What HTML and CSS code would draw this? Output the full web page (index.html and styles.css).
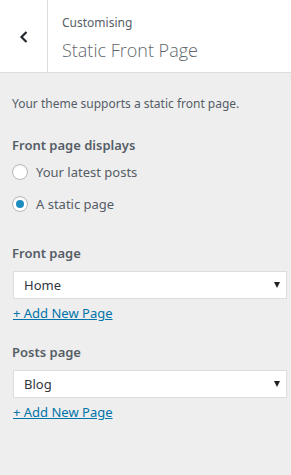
FILE: index.html
```html
<!DOCTYPE html>
<html lang="en">
<head>
	<meta charset="UTF-8">
	<title>Static Front Page</title>
	<link rel="stylesheet" href="styles.css">
</head>
<body>
	<div class="panel">
		<div class="head">
			<div class="back">
				<svg width="10" height="12" viewBox="0 0 10 12"><path d="M7.5 1 L2.5 6 L7.5 11" fill="none" stroke="#23282d" stroke-width="2.2"/></svg>
			</div>
			<div class="title">
				<span class="sub">Customising</span>
				<h3>Static Front Page</h3>
			</div>
		</div>

		<div class="body">
			<p class="desc">Your theme supports a static front page.</p>

			<div class="group">
				<span class="label">Front page displays</span>
				<label class="radio"><span class="dot"></span>Your latest posts</label>
				<label class="radio"><span class="dot on"></span>A static page</label>
			</div>

			<div class="group pick">
				<span class="label">Front page</span>
				<div class="select"><span>Home</span><i class="arr"></i></div>
				<a href="#" class="add">+ Add New Page</a>
			</div>

			<div class="group pick2">
				<span class="label">Posts page</span>
				<div class="select"><span>Blog</span><i class="arr"></i></div>
				<a href="#" class="add">+ Add New Page</a>
			</div>
		</div>
	</div>
</body>
</html>
```

FILE: styles.css
```css
* {
	padding: 0;
	margin: 0;
	box-sizing: border-box;
}
body {
	background: #eee;
	font-family: "Noto Sans", "Open Sans", sans-serif;
	color: #555d66;
	font-size: 13px;
}
.head {
	display: flex;
	height: 73px;
	background: #fff;
	border-bottom: 1px solid #ddd;
}
.back {
	width: 48px;
	border-right: 1px solid #ddd;
	display: flex;
	align-items: center;
	justify-content: center;
	padding-top: 2px;
}
.title {
	padding: 13px 0 0 14px;
}
.sub {
	display: block;
	font-size: 12px;
	line-height: 20px;
}
.title h3 {
	font-family: "Open Sans", "Noto Sans", sans-serif;
	font-size: 18px;
	font-weight: 300;
	line-height: 26px;
	margin-top: 4px;
	color: #5f666d;
}
.body {
	padding: 0 4px 0 12px;
}
.desc {
	margin-top: 21px;
	line-height: 20px;
	font-size: 12px;
}
.group {
	margin-top: 21px;
	line-height: 20px;
}
.label {
	display: block;
	font-size: 13px;
	font-weight: 600;
	line-height: 20px;
	margin-bottom: 8px;
}
.radio {
	display: flex;
	align-items: center;
	height: 18px;
	margin-bottom: 14px;
	font-size: 13px;
}
.dot {
	width: 16px;
	height: 16px;
	border: 1px solid #b4b9be;
	border-radius: 50%;
	background: #fff;
	margin-right: 8px;
	box-shadow: inset 0 1px 2px rgba(0,0,0,0.07);
	display: flex;
	align-items: center;
	justify-content: center;
}
.dot.on:after {
	content: "";
	width: 8px;
	height: 8px;
	border-radius: 50%;
	background: #1e8cbe;
}
.pick {
	margin-top: 30px;
}
.pick2 {
	margin-top: 19px;
}
.select {
	margin-left: 1px;
	height: 28px;
	background: #fff;
	border: 1px solid #ddd;
	display: flex;
	align-items: center;
	justify-content: space-between;
	padding: 0 6px 0 10px;
	color: #32373c;
	font-size: 13px;
}
.arr {
	width: 0;
	height: 0;
	border-left: 3px solid transparent;
	border-right: 3px solid transparent;
	border-top: 6px solid #222;
}
.add {
	display: inline-block;
	margin: 4px 0 0 1px;
	color: #0073aa;
	font-size: 13px;
	line-height: 20px;
}
```
